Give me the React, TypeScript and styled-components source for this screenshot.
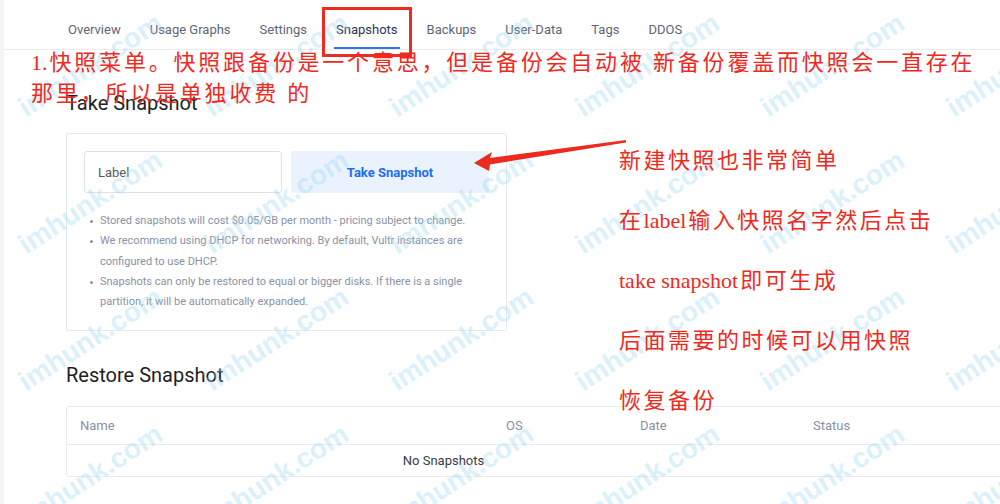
import React from "react";
import styled, { createGlobalStyle } from "styled-components";

const GlobalStyle = createGlobalStyle`
  html, body { margin: 0; padding: 0; background: #ffffff; }
  body { overflow: hidden; font-family: Roboto, "Liberation Sans", sans-serif; }
  * { box-sizing: border-box; }
`;

const Page = styled.div`
  position: relative;
  width: 1000px;
  height: 504px;
  overflow: hidden;
  background: #ffffff;
  border-left: 4px solid #f3f4f6;
`;

const Nav = styled.nav`
  display: flex;
  gap: 25px;
  height: 50px;
  padding-left: 62px;
  border-bottom: 1px solid #e9ecf0;
`;

const Tab = styled.div<{ $active?: boolean }>`
  height: 49px;
  padding: 22px 2px 9px;
  font-size: 13px;
  line-height: 16px;
  color: ${(p) => (p.$active ? "#2a3752" : "#5d6678")};
  border-bottom: 2px solid ${(p) => (p.$active ? "#2f74ea" : "transparent")};
  white-space: nowrap;
`;

const Main = styled.main`
  padding: 41px 0 0 62px;
`;

const SectionTitle = styled.h2<{ $gap?: number }>`
  margin: ${(p) => p.$gap ?? 0}px 0 0;
  font-size: 20px;
  line-height: 24px;
  font-weight: 400;
  color: #1d1f24;
`;

const Card = styled.section`
  width: 441px;
  margin-top: 18px;
  padding: 17px 17px 18px;
  border: 1px solid #e6e9ee;
  border-radius: 2px;
`;

const FormRow = styled.div`
  display: grid;
  grid-template-columns: 198px 198px;
  gap: 9px;
`;

const LabelInput = styled.input`
  height: 42px;
  padding: 0 13px;
  border: 1px solid #dde1e6;
  border-radius: 3px;
  font-family: Roboto, "Liberation Sans", sans-serif;
  font-size: 13px;
  color: #333;
  outline: none;
  &::placeholder { color: #565a60; }
`;

const PrimaryButton = styled.button`
  height: 42px;
  border: none;
  border-radius: 3px;
  background: #eaf2fe;
  color: #1a6ef5;
  font-family: Roboto, "Liberation Sans", sans-serif;
  font-size: 13px;
  font-weight: 700;
`;

const Notes = styled.ul`
  list-style: none;
  margin: 18px 0 0;
  padding: 0;
`;

const Note = styled.li`
  position: relative;
  padding-left: 16px;
  font-size: 11px;
  line-height: 20.3px;
  color: #8992a6;
  &::before {
    content: "";
    position: absolute;
    left: 6px;
    top: 9px;
    width: 3px;
    height: 3px;
    border-radius: 50%;
    background: #8992a6;
  }
`;

const Table = styled.div`
  width: 1000px;
  margin-top: 19px;
  border: 1px solid #e8ebef;
  border-radius: 3px;
`;

const TableRow = styled.div<{ $head?: boolean }>`
  display: grid;
  grid-template-columns: 426px 134px 173px 1fr;
  height: ${(p) => (p.$head ? 38 : 31)}px;
  align-items: center;
  border-bottom: ${(p) => (p.$head ? "1px solid #e8ebef" : "none")};
`;

const HeadCell = styled.div`
  padding-left: 13px;
  font-size: 13px;
  color: #8791a6;
`;

const EmptyCell = styled.div`
  grid-column: 1 / 4;
  padding-left: 20px;
  text-align: center;
  font-size: 13px;
  color: #383c45;
`;

/* watermark overlay */
const WatermarkLayer = styled.div`
  position: absolute;
  left: 25px;
  top: -15px;
  display: grid;
  grid-template-columns: repeat(6, 185.5px);
  grid-auto-rows: 137px;
  pointer-events: none;
  z-index: 1;
`;

const WatermarkCell = styled.div`
  display: flex;
  align-items: flex-end;
`;

const WatermarkText = styled.span`
  display: block;
  transform: rotate(-33deg);
  transform-origin: 0 100%;
  font-family: "Liberation Sans", Arial, sans-serif;
  font-weight: 700;
  font-size: 28px;
  line-height: 1;
  color: rgba(150, 215, 245, 0.36);
  white-space: nowrap;
`;

/* annotations */
const HighlightBox = styled.div`
  position: absolute;
  left: 318px;
  top: 7px;
  width: 90px;
  height: 50px;
  border: 3px solid #ee2b1f;
  z-index: 2;
`;

const Annotation = styled.div`
  position: absolute;
  z-index: 2;
  color: #ee2a1e;
  font-family: "Liberation Serif", "Noto Sans CJK SC", serif;
  white-space: nowrap;
`;

const Latin = styled.span`
  letter-spacing: 0;
  margin-right: 2px;
`;

const TopNote = styled(Annotation)`
  left: 27px;
  top: 47px;
  font-size: 22px;
  line-height: 31px;
  letter-spacing: 2.8px;
`;

const SideNote = styled(Annotation)`
  left: 615px;
  top: 131px;
  font-size: 22px;
  line-height: 60px;
  letter-spacing: 2.5px;
`;

const ArrowSvg = styled.svg`
  position: absolute;
  left: 465px;
  top: 135px;
  z-index: 2;
`;

const tabs = ["Overview", "Usage Graphs", "Settings", "Snapshots", "Backups", "User-Data", "Tags", "DDOS"];

export default function App() {
  const marks = Array.from({ length: 24 });
  return (
    <>
      <GlobalStyle />
      <Page>
        <Nav>
          {tabs.map((t) => (
            <Tab key={t} $active={t === "Snapshots"}>
              {t}
            </Tab>
          ))}
        </Nav>
        <Main>
          <SectionTitle>Take Snapshot</SectionTitle>
          <Card>
            <FormRow>
              <LabelInput placeholder="Label" />
              <PrimaryButton>Take Snapshot</PrimaryButton>
            </FormRow>
            <Notes>
              <Note>Stored snapshots will cost $0.05/GB per month - pricing subject to change.</Note>
              <Note>We recommend using DHCP for networking. By default, Vultr instances are configured to use DHCP.</Note>
              <Note>Snapshots can only be restored to equal or bigger disks. If there is a single partition, it will be automatically expanded.</Note>
            </Notes>
          </Card>
          <SectionTitle $gap={32}>Restore Snapshot</SectionTitle>
          <Table>
            <TableRow $head>
              <HeadCell>Name</HeadCell>
              <HeadCell>OS</HeadCell>
              <HeadCell>Date</HeadCell>
              <HeadCell>Status</HeadCell>
            </TableRow>
            <TableRow>
              <EmptyCell>No Snapshots</EmptyCell>
            </TableRow>
          </Table>
        </Main>

        <WatermarkLayer>
          {marks.map((_, i) => (
            <WatermarkCell key={i}>
              <WatermarkText>imhunk.com</WatermarkText>
            </WatermarkCell>
          ))}
        </WatermarkLayer>

        <HighlightBox />
        <TopNote>
          <Latin>1.</Latin>快照菜单。快照跟备份是一个意思，但是备份会自动被 新备份覆盖而快照会一直存在
          <br />
          那里，所以是单独收费 的
        </TopNote>
        <ArrowSvg width="160" height="40" viewBox="0 0 160 40">
          <polygon points="5,28 23,17 21,23 157,5 157,7.5 21,29.5 20,36" fill="#ee2a1e" />
        </ArrowSvg>
        <SideNote>
          新建快照也非常简单
          <br />
          在<Latin>label</Latin>输入快照名字然后点击
          <br />
          <Latin>take snapshot</Latin>即可生成
          <br />
          后面需要的时候可以用快照
          <br />
          恢复备份
        </SideNote>
      </Page>
    </>
  );
}
